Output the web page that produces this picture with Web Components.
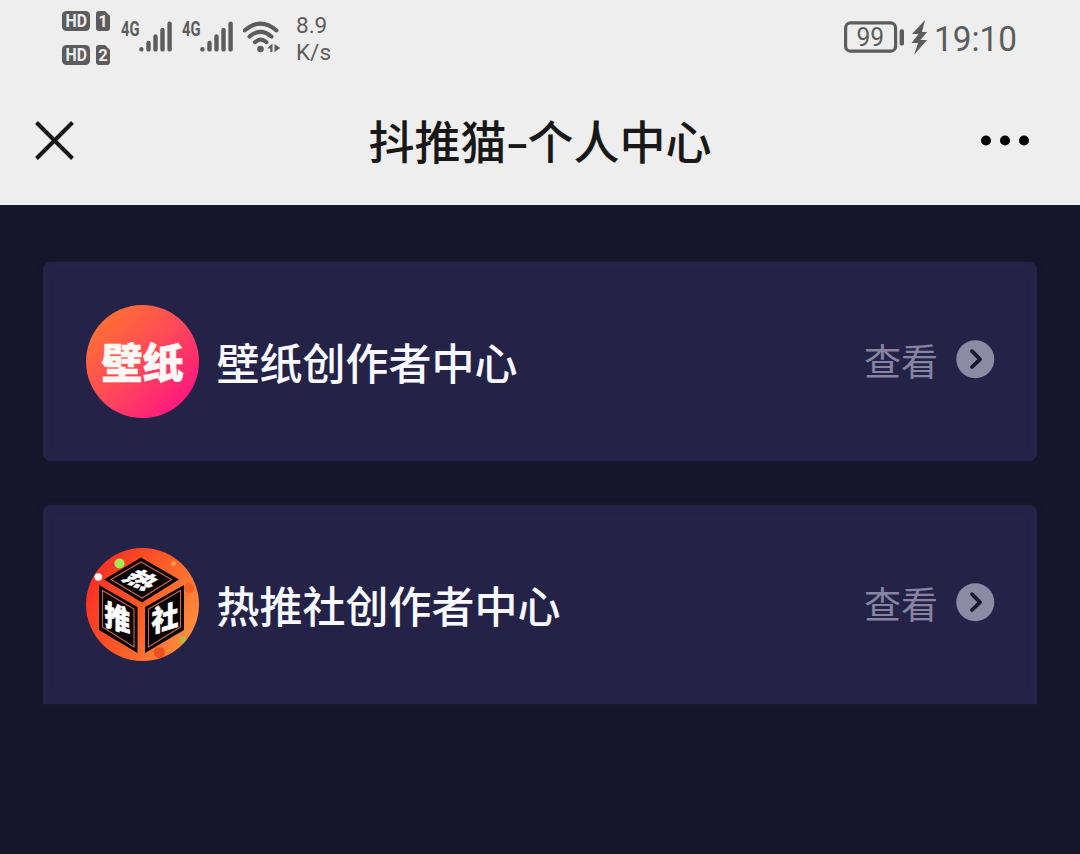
<!DOCTYPE html>
<html lang="zh-CN">
<head>
<meta charset="utf-8">
<title>抖推猫-个人中心</title>
<style>
html,body{margin:0;height:100%}
body{background:#16162a;font-family:"Noto Sans CJK SC",sans-serif;overflow:hidden}
</style>
</head>
<body>
<profile-app></profile-app>
<script>
const define = (name, html) => customElements.define(name, class extends HTMLElement {
  constructor() {
    super();
    this.attachShadow({mode: 'open'}).innerHTML = typeof html === 'function' ? html(this) : html;
  }
});

define('hd-badge', el => `
<style>:host{display:block;height:20px}svg{display:block;overflow:visible}text{font:700 17.5px Roboto,sans-serif;fill:#eee}</style>
<svg width="48" height="20">
  <rect width="28" height="20" rx="4.5" fill="#5c5c5c"/>
  <path d="M37 0H43L48 5V17Q48 20 45 20H37Q34 20 34 17V3Q34 0 37 0Z" fill="#5c5c5c"/>
  <text x="3.6" y="16" textLength="21.5" lengthAdjust="spacingAndGlyphs">HD</text>
  <text x="41" y="16" text-anchor="middle" style="font-size:16.5px">${el.getAttribute('sim')}</text>
</svg>`);

define('signal-icon', `
<style>:host{display:block}svg{display:block;overflow:visible}text{font:700 20px Roboto,sans-serif;fill:#5c5c5c}</style>
<svg width="53" height="34">
  <text x="0" y="16" textLength="18.5" lengthAdjust="spacingAndGlyphs">4G</text>
  <g stroke="#5c5c5c" stroke-width="4.4" stroke-linecap="round">
    <path d="M20.4 29.2V29.4M27.5 23V29.4M34.5 16.5V29.4M41.5 10V29.4M48.6 3.6V29.4"/>
  </g>
</svg>`);

define('wifi-icon', `
<style>:host{display:block}svg{display:block}</style>
<svg width="40" height="34">
  <g fill="none" stroke="#5c5c5c" stroke-width="4" stroke-linecap="round">
    <path d="M1.5 10.5Q17.5-3.3 33.5 10.5"/><path d="M6.5 16.6Q17.5 7 28.5 16.6"/><path d="M12 22.2Q17.5 17 23.5 22.2"/>
  </g>
  <circle cx="17.5" cy="29" r="3.3" fill="#5c5c5c"/>
  <path d="M24 28.5L29.5 23.4V32H27.3V28.5ZM31.5 24L37.2 28L31.5 32.3Z" fill="#5c5c5c"/>
</svg>`);

define('battery-icon', `
<style>:host{display:block}svg{display:block}text{font:400 26px Roboto,sans-serif;fill:#5c5c5c}</style>
<svg width="86" height="38">
  <rect x="2.6" y="3.8" width="50" height="28.4" rx="5" fill="none" stroke="#5c5c5c" stroke-width="3.2"/>
  <rect x="56.6" y="10.2" width="4.4" height="16.3" rx="1.8" fill="#5c5c5c"/>
  <text x="13.4" y="27.3" textLength="27.6" lengthAdjust="spacingAndGlyphs">99</text>
  <path d="M82 1L69 15H75.5L68.5 24H75L71 36L84 21H77.5L84 13H79Z" fill="#5c5c5c"/>
</svg>`);

define('status-bar', `
<style>
:host{display:flex;height:76px;box-sizing:border-box;padding:0 58px 0 62px;color:#5c5c5c;justify-content:space-between;font-family:Roboto,sans-serif}
.l,.r{display:flex;align-items:flex-start}
.hd{display:grid;gap:14px;padding-top:11px;margin-right:11px}
signal-icon,wifi-icon{padding-top:20px}
signal-icon{margin-right:8px}
.speed{font-size:22.5px;line-height:27px;padding-top:12px;margin-left:13px}
battery-icon{padding-top:19px;margin-right:3px}
.time{display:block;padding-top:19px}
.time text{font:400 35px Roboto,sans-serif;fill:#5c5c5c}
</style>
<div class="l">
  <div class="hd"><hd-badge sim="1"></hd-badge><hd-badge sim="2"></hd-badge></div>
  <signal-icon></signal-icon><signal-icon></signal-icon><wifi-icon></wifi-icon>
  <div class="speed">8.9<br>K/s</div>
</div>
<div class="r"><battery-icon></battery-icon>
<svg class="time" width="90" height="44"><text x="2" y="32" textLength="83" lengthAdjust="spacingAndGlyphs">19:10</text></svg></div>`);

define('title-bar', `
<style>
:host{display:grid;grid-template-columns:200px 1fr 200px;height:129px;align-items:center;color:#181818}
svg{display:block}
.close{margin-left:35px}
.more{justify-self:end;margin-right:50px}
h1{margin:-4px 0 0;font-size:46px;line-height:60px;font-weight:500;text-align:center;white-space:nowrap}
</style>
<svg class="close" width="40" height="40"><path d="M1.5 1.5L37.5 37.5M37.5 1.5L1.5 37.5" stroke="#181818" stroke-width="4"/></svg>
<h1><slot></slot></h1>
<svg class="more" width="50" height="12" fill="#000"><circle cx="6" cy="5.5" r="5"/><circle cx="25" cy="5.5" r="5"/><circle cx="44" cy="5.5" r="5"/></svg>`);

define('wallpaper-logo', `
<style>:host{display:block}svg{display:block}text{font:900 41px "Noto Sans CJK SC",sans-serif;fill:#fff8f4;stroke:#fff8f4;stroke-width:.6;stroke-linejoin:round}</style>
<svg width="114" height="114">
  <defs><linearGradient id="g" x1=".12" y1=".12" x2=".85" y2=".85"><stop stop-color="#ff7033"/><stop offset=".5" stop-color="#ff4a58"/><stop offset="1" stop-color="#fe1b7c"/></linearGradient></defs>
  <circle cx="56.5" cy="56.5" r="56.5" fill="url(#g)"/>
  <text x="15.5" y="72.5" textLength="82">壁纸</text>
</svg>`);

define('cube-logo', `
<style>:host{display:block}svg{display:block}text{font:900 27px "Noto Sans CJK SC",sans-serif;fill:#fff;stroke:#fff;stroke-width:.5;text-anchor:middle}</style>
<svg width="114" height="114">
  <defs>
    <linearGradient id="g" x1="0" y1=".2" x2="1" y2=".7"><stop stop-color="#fb2b25"/><stop offset=".5" stop-color="#fb5a26"/><stop offset="1" stop-color="#fd9140"/></linearGradient>
    <clipPath id="c"><circle cx="56.5" cy="56.5" r="56.5"/></clipPath>
  </defs>
  <g clip-path="url(#c)">
    <rect width="114" height="114" fill="url(#g)"/>
    <circle cx="33.5" cy="15.5" r="5" fill="#a5e956"/><circle cx="12.3" cy="29" r="3.8" fill="#fff"/>
    <circle cx="87.5" cy="15.5" r="2.2" fill="#ffa04a"/><circle cx="103" cy="40" r="5" fill="#f66024"/>
    <circle cx="73.5" cy="104.5" r="5.5" fill="#ed5020"/><circle cx="97" cy="92" r="3.5" fill="#b5bb43"/>
  </g>
  <g fill="#080404">
    <path d="M55 9.5L93 31.5L56 54.5L18 31.5Z"/><path d="M13 37L51.5 59V105L13 82Z"/><path d="M98 37L59 59V105L98 82Z"/>
  </g>
  <g fill="none" stroke="#c9664e" stroke-width="1.1">
    <path d="M55 14L85.5 31.5L56 50L25 31.5Z"/><path d="M16.5 42.5L48 61V99L16.5 79Z"/><path d="M94.5 42.5L62.5 61V99L94.5 79Z"/>
  </g>
  <text transform="matrix(.9 .43 -.8 .5 55.5 32)" y="10">热</text>
  <text transform="matrix(.96 .3 0 1.08 31.5 70)" y="10">推</text>
  <text transform="matrix(1 -.3 0 1.08 79 70)" y="10">社</text>
</svg>`);

define('entry-card', `
<style>
:host{display:flex;align-items:center;box-sizing:border-box;height:199px;padding:0 42px 0 43px;background:#242347;border-radius:8px;box-shadow:0 0 5px 1px #191830,inset 0 0 8px #29224a}
.name{margin-left:16.5px;font-size:43px;line-height:58px;font-weight:500;color:#f8f8ff;flex:1;margin-top:-2px;white-space:nowrap}
.view{font-size:37px;line-height:50px;color:#8783a0;margin:-4px 18px 0 0}
svg{display:block;margin-top:-5px}
</style>
<slot name="logo"></slot><div class="name"><slot></slot></div><div class="view">查看</div>
<svg width="39" height="39"><circle cx="19.3" cy="19.3" r="19" fill="#8d8aa6"/><path d="M16 11.2L24 19.3L16 27" fill="none" stroke="#16162f" stroke-width="3.8" stroke-linecap="round" stroke-linejoin="round"/></svg>`);

define('profile-app', `
<style>
:host{display:block}
header{background:#eee;height:205px}
main{display:grid;gap:44px;padding:57px 43px}
.last{border-radius:8px 8px 0 0}
.dash{display:inline-block;width:21px;transform:scaleX(1.45)}
</style>
<header><status-bar></status-bar><title-bar>抖推猫<span class="dash">-</span>个人中心</title-bar></header>
<main>
<entry-card><wallpaper-logo slot="logo"></wallpaper-logo>壁纸创作者中心</entry-card>
<entry-card class="last"><cube-logo slot="logo"></cube-logo>热推社创作者中心</entry-card>
</main>`);
</script>
</body>
</html>
